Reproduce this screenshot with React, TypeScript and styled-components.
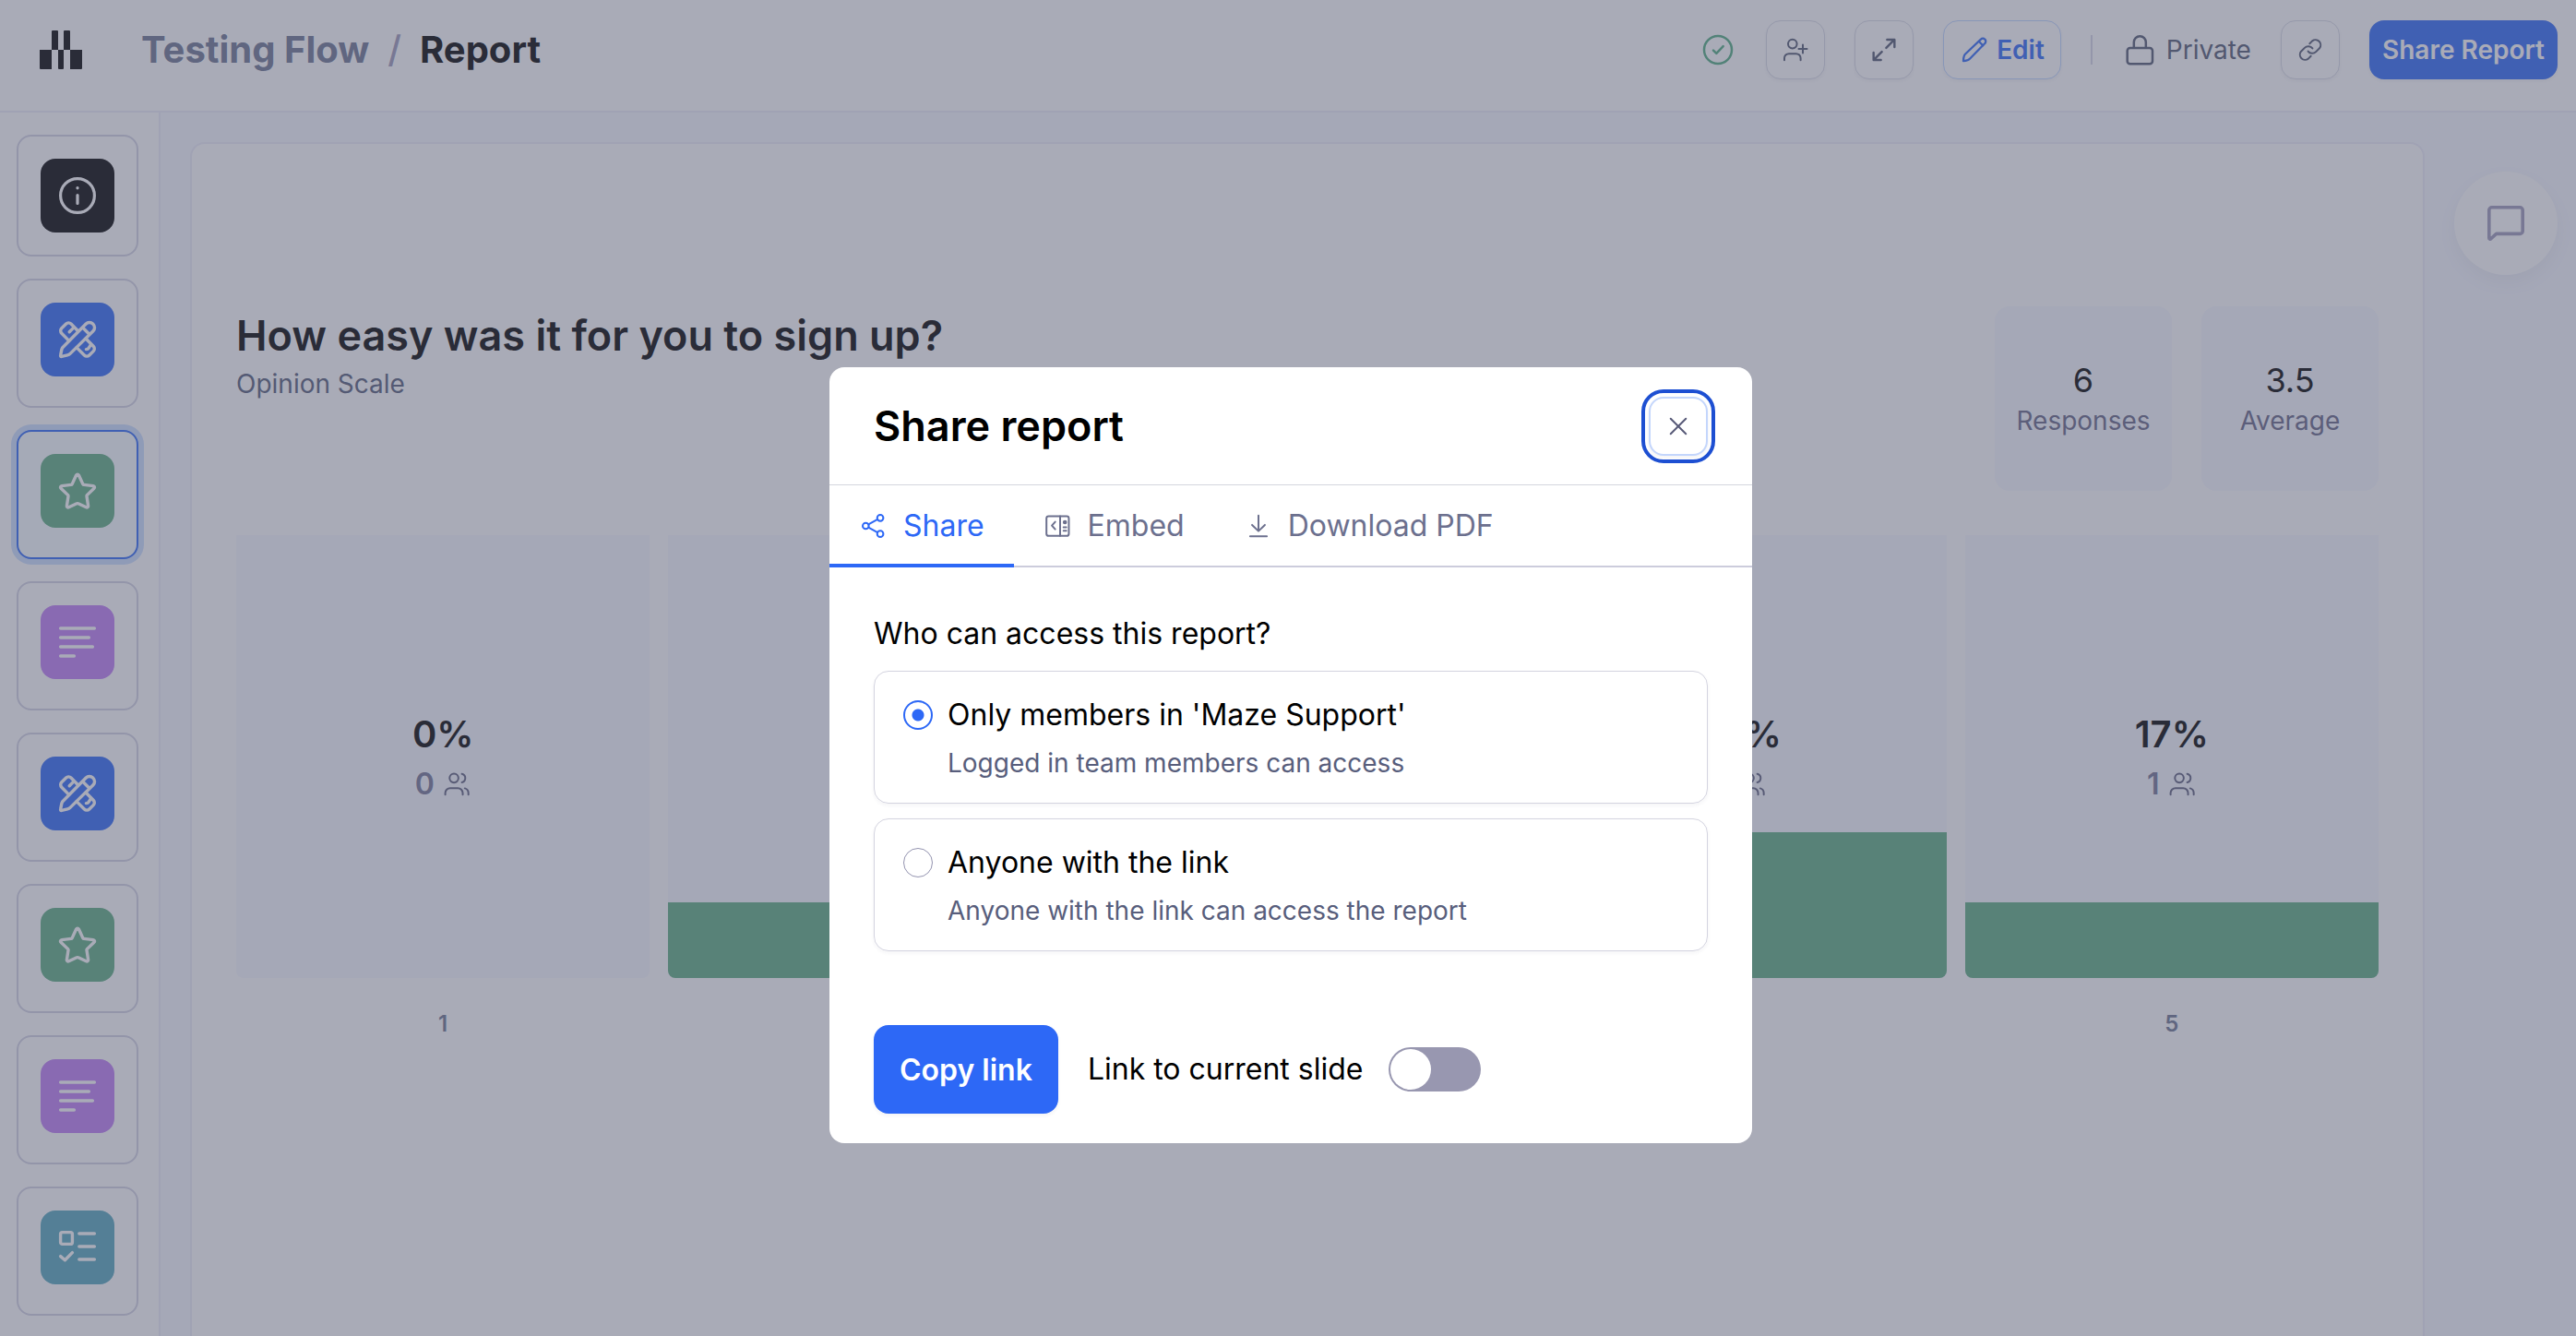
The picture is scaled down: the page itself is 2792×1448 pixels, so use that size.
import React, { useState } from "react";
import styled, { createGlobalStyle, css } from "styled-components";

const GlobalStyle = createGlobalStyle`
  *, *::before, *::after { box-sizing: border-box; }
  html, body { margin: 0; height: 100%; overflow: hidden; }
  #root { height: 100%; }
  body {
    font-family: Inter, "Liberation Sans", sans-serif;
    font-size: 28px;
    color: #000;
    background: #f6f8ff;
  }
  button, input { font: inherit; color: inherit; margin: 0; }
  h1, h2, h3, p, ol, ul, fieldset, legend { margin: 0; padding: 0; border: 0; list-style: none; }
`;

const Page = styled.div`
  height: 100vh;
  display: flex;
  flex-direction: column;
`;

/* ---------- icons ---------- */

const Icon = styled.svg.attrs<{ $size?: number; $stroke?: number }>((p) => ({
  viewBox: p.viewBox ?? "0 0 24 24",
  "aria-hidden": true,
}))<{ $size?: number; $stroke?: number }>`
  width: ${(p) => p.$size ?? 32}px;
  height: ${(p) => p.$size ?? 32}px;
  flex: none;
  display: block;
  fill: none;
  stroke: currentColor;
  stroke-width: ${(p) => p.$stroke ?? 1.5};
  stroke-linecap: round;
  stroke-linejoin: round;
`;

const LogoMark = () => (
  <svg width="46" height="42" viewBox="0 0 46 42" fill="#000" aria-hidden>
    <path d="M0 21h13v21H1a1 1 0 0 1-1-1z" />
    <path d="M33 21h13v20a1 1 0 0 1-1 1H33z" />
    <path d="M14 0h5a1 1 0 0 1 1 1v20h-7V1a1 1 0 0 1 1-1z" />
    <path d="M27 0h5a1 1 0 0 1 1 1v20h-7V1a1 1 0 0 1 1-1z" />
    <path d="M20 21h6v20a1 1 0 0 1-1 1h-4a1 1 0 0 1-1-1z" />
  </svg>
);

const InfoIcon = () => (
  <Icon $size={48} $stroke={1.6}>
    <circle cx="12" cy="12" r="9.2" />
    <path d="M12 11.8v4.4M12 7.8v.1" />
  </Icon>
);
const DesignIcon = () => (
  <Icon $size={48} $stroke={1.7}>
    <path d="M3.9 16.4 16.6 3.5a2.600 2.600 0 0 1 3.700 0l.2.2a2.600 2.600 0 0 1 0 3.700L8 19.700c-.4.400-.9.600-1.400.7l-3.200.8c-.4.100-.7-.2-.6-.6l.6-3c.1-.5.300-.9.500-1.200z" />
    <path d="m14.900 5.600 3.500 3.500" />
    <path d="M7.400 12.700 3.400 8.600a1.900 1.900 0 0 1 0-2.700l2.400-2.400a1.900 1.900 0 0 1 2.700 0l3.900 4" />
    <path d="m9.800 5.700-2.200 2.200" />
    <path d="m16.500 11.500 4.100 4.100a1.900 1.900 0 0 1 0 2.700l-2.200 2.200a1.900 1.900 0 0 1-2.700 0l-4.200-4.200" />
    <path d="m19.300 14.700-1.200 1.900c-.3.500-.8.700-1.400.7" />
  </Icon>
);
const StarIcon = () => (
  <Icon $size={48} $stroke={1.7}>
    <path d="M11.300 3.500a.8.800 0 0 1 1.400 0l2.200 4.800a.8.800 0 0 0 .6.400l5 .6c.7.100 1 .9.500 1.300l-3.700 3.600a.8.800 0 0 0-.3.700l.8 5.200c.1.600-.5 1.100-1.100.8l-4.300-2a.9.900 0 0 0-.8 0l-4.300 2c-.6.300-1.200-.2-1.100-.8l.8-5.200a.8.800 0 0 0-.3-.7L3 10.600c-.5-.4-.2-1.200.5-1.300l5-.6a.8.800 0 0 0 .6-.4z" />
  </Icon>
);
const TextIcon = () => (
  <Icon $size={48} $stroke={1.7}>
    <path d="M2.800 4.500h18.400M2.800 9.500h15.400M2.800 14.500h17.400M2.800 19.500h7.400" />
  </Icon>
);
const ChecklistIcon = () => (
  <Icon $size={48} $stroke={1.7}>
    <rect x="2.800" y="3.800" width="6.400" height="6.400" rx="1" />
    <path d="M12.900 4.500h8.300M12.900 11.500h8.300M12.900 18.500h8.300M2.800 16.800l2.400 2.100 4-4.100" />
  </Icon>
);
const CheckCircleIcon = () => (
  <Icon $size={40}>
    <circle cx="12" cy="12" r="9" />
    <path d="m9 12.400 2 1.900 4.400-4.600" />
  </Icon>
);
const UserPlusIcon = () => (
  <Icon>
    <circle cx="9.600" cy="7.200" r="3.600" />
    <path d="M3 20.500v-1.700a3.700 3.700 0 0 1 3.700-3.700h5.800a3.700 3.700 0 0 1 3.700 3.700v1.700M18 7.800v6.800M21.400 11.200h-6.800" />
  </Icon>
);
const ExpandIcon = () => (
  <Icon $stroke={1.8}>
    <path d="M14.500 3.700h6v6M20.300 3.900l-6.500 6.500M9.500 20.300h-6v-6M3.700 20.100l6.500-6.500" />
  </Icon>
);
const PencilIcon = () => (
  <Icon $stroke={1.7}>
    <path d="M3 21.100c0-1.700.2-3 .6-4.100.2-.6.600-1.200 1-1.600L17.200 3.500a2.300 2.300 0 0 1 3.300 0 2.300 2.300 0 0 1 0 3.300L8.200 19.300c-.5.500-1.100.8-1.700 1-1 .3-2.100.6-3.500.8z" />
    <path d="m15.700 5.200 3.200 3.200" />
  </Icon>
);
const LockIcon = () => (
  <Icon $size={40}>
    <rect x="3.400" y="10.800" width="16.400" height="10.400" rx="1.800" />
    <path d="M7.700 10.500V7a3.900 3.900 0 0 1 7.800 0v3.500" />
  </Icon>
);
const LinkIcon = () => (
  <Icon>
    <path d="M10.200 13.200a4.200 4.200 0 0 0 6.400.4l2.900-2.900a4.200 4.200 0 0 0-5.900-5.900l-2.100 2.100" />
    <path d="M13.800 10.800a4.200 4.200 0 0 0-6.400-.4l-2.900 2.900a4.200 4.200 0 0 0 5.900 5.900l2.100-2.100" />
  </Icon>
);
const ChatIcon = () => (
  <Icon $size={48} $stroke={1.8}>
    <path d="M2.900 4.900a1.500 1.500 0 0 1 1.500-1.500h15.200a1.500 1.500 0 0 1 1.500 1.500v11.300a1.500 1.500 0 0 1-1.500 1.500H6.800l-2.900 2.700c-.4.300-1 .1-1-.4z" />
  </Icon>
);
const UsersIcon = () => (
  <Icon>
    <circle cx="9.800" cy="7" r="3.600" />
    <path d="M2.700 20.500v-1.300a4 4 0 0 1 4-4h6.200a4 4 0 0 1 4 4v1.300M16.200 3.500a3.600 3.600 0 0 1 0 7M18.600 15.300a4 4 0 0 1 2.900 3.900v1.300" />
  </Icon>
);
const CloseIcon = () => (
  <Icon>
    <path d="M5.800 5.800l12.400 12.400M18.200 5.800 5.800 18.200" />
  </Icon>
);
const ShareIcon = () => (
  <Icon>
    <circle cx="5.500" cy="12" r="2.500" />
    <circle cx="17.300" cy="5.500" r="2.500" />
    <circle cx="17.300" cy="18.500" r="2.500" />
    <path d="M7.700 10.800l7.400-4.100M7.700 13.200l7.400 4.100" />
  </Icon>
);
const EmbedIcon = () => (
  <Icon>
    <rect x="2.400" y="4.100" width="18.200" height="16" rx="1.800" />
    <path d="M13.500 4.100v16M9.500 8.700 6.800 11.700l2.700 3M16.300 13.100h2.200M16.300 16h2.200" />
    <circle cx="17.400" cy="9" r="1" fill="currentColor" />
  </Icon>
);
const DownloadIcon = () => (
  <Icon>
    <path d="M12 3.500v12.300M6.800 11.200l5.200 5 5.200-5M5.200 20.500h13.600" />
  </Icon>
);

/* ---------- header ---------- */

const TopBar = styled.header`
  height: 122px;
  flex: none;
  display: flex;
  align-items: flex-start;
  justify-content: space-between;
  padding: 22px 20px 0 43px;
  background: #fff;
  border-bottom: 2px solid #ececf8;
`;

const Brand = styled.div`
  height: 64px;
  display: flex;
  align-items: center;
  gap: 64px;
`;

const Crumbs = styled.nav`
  display: flex;
  align-items: center;
  gap: 20px;
  font-size: 40px;
  line-height: 48px;
  font-weight: 700;
`;

const CrumbLink = styled.a`
  color: #6c7490;
  text-decoration: none;
`;

const Slash = styled.span`
  color: #9c98b8;
  font-weight: 500;
`;

const Actions = styled.div`
  display: flex;
  align-items: center;
  gap: 32px;
`;

const Saved = styled.span`
  color: #50ac80;
`;

const buttonBase = css`
  display: inline-flex;
  align-items: center;
  justify-content: center;
  height: 64px;
  border-radius: 16px;
  cursor: pointer;
  box-shadow: 0 2px 4px rgba(30, 34, 70, 0.06);
`;

const IconButton = styled.button`
  ${buttonBase}
  width: 64px;
  padding: 0;
  color: #505870;
  background: #fff;
  border: 1px solid #d8dae4;
`;

const EditButton = styled.button`
  ${buttonBase}
  gap: 8px;
  padding: 0 17px;
  color: #2d68f6;
  background: #fff;
  border: 1px solid #bcd4ff;
  font-weight: 600;
`;

const PrimaryButton = styled.button<{ $large?: boolean }>`
  ${buttonBase}
  height: ${(p) => (p.$large ? 96 : 64)}px;
  padding: 0 ${(p) => (p.$large ? 28 : 14)}px;
  font-size: ${(p) => (p.$large ? 32 : 28)}px;
  font-weight: 600;
  color: #fff;
  background: #2d68f6;
  border: 0;
`;

const Divider = styled.span`
  width: 2px;
  height: 32px;
  background: #d4d4e4;
`;

const Privacy = styled.span`
  display: flex;
  align-items: center;
  gap: 8px;
  color: #505870;
`;

/* ---------- side rail ---------- */

const Body = styled.div`
  flex: 1;
  min-height: 0;
  display: flex;
`;

const Rail = styled.nav`
  width: 174px;
  flex: none;
  display: flex;
  flex-direction: column;
  gap: 24px;
  padding: 24px 22px 0 18px;
  background: #fff;
  border-right: 2px solid #ececf8;
`;

const Slide = styled.button<{ $selected?: boolean; $short?: boolean }>`
  flex: none;
  display: flex;
  justify-content: center;
  align-items: flex-start;
  height: ${(p) => (p.$short ? 132 : 140)}px;
  padding: 24px 0 0;
  border-radius: 16px;
  border: 2px solid ${(p) => (p.$selected ? "#2d68f6" : "#d3d3e3")};
  background: ${(p) => (p.$selected ? "#f7fdff" : "#fff")};
  box-shadow: ${(p) => (p.$selected ? "0 0 0 6px #cadeff" : "none")};
  cursor: pointer;
`;

const SlideBadge = styled.span<{ $color: string }>`
  width: 80px;
  height: 80px;
  display: flex;
  align-items: center;
  justify-content: center;
  border-radius: 16px;
  color: #fff;
  background: ${(p) => p.$color};
`;

/* ---------- report ---------- */

const Main = styled.main`
  flex: 1;
  min-width: 0;
  display: flex;
  align-items: stretch;
  gap: 32px;
  padding: 32px 20px 0 32px;
`;

const Card = styled.section`
  flex: 1;
  min-width: 0;
  padding: 176px 48px 0;
  background: #fff;
  border: 2px solid #ececf8;
  border-bottom: 0;
  border-radius: 16px 16px 0 0;
`;

const CardHead = styled.div`
  display: flex;
  justify-content: space-between;
  margin-bottom: 48px;
`;

const Question = styled.h1`
  font-size: 45px;
  line-height: 64px;
  font-weight: 600;
`;

const Kind = styled.p`
  line-height: 40px;
  color: #545c78;
`;

const Stats = styled.div`
  display: flex;
  gap: 32px;
`;

const Stat = styled.div`
  width: 192px;
  height: 200px;
  display: flex;
  flex-direction: column;
  align-items: center;
  justify-content: center;
  border-radius: 16px;
  background: #f6f8ff;
`;

const StatValue = styled.span`
  font-size: 36px;
  line-height: 48px;
`;

const StatName = styled.span`
  line-height: 40px;
  color: #646484;
`;

const Chart = styled.ol`
  display: grid;
  grid-template-columns: repeat(5, 1fr);
  column-gap: 20px;
`;

const Column = styled.li`
  display: flex;
  flex-direction: column;
  align-items: center;
  gap: 34px;
`;

const Track = styled.div`
  position: relative;
  width: 100%;
  height: 480px;
  display: flex;
  flex-direction: column;
  align-items: center;
  justify-content: center;
  gap: 6px;
  padding-top: 6px;
  border-radius: 0 0 8px 8px;
  overflow: hidden;
  background: #f6f8ff;
`;

const Fill = styled.div`
  position: absolute;
  left: 0;
  right: 0;
  bottom: 0;
  background: #5cac80;
`;

const Percent = styled.strong`
  position: relative;
  font-size: 40px;
  line-height: 48px;
  font-weight: 600;
`;

const Count = styled.span`
  position: relative;
  display: flex;
  align-items: center;
  gap: 8px;
  font-size: 32px;
  line-height: 48px;
  font-weight: 600;
  color: #727594;

  svg { color: #5c5e7c; }
`;

const ScaleLabel = styled.span`
  font-size: 24px;
  line-height: 32px;
  font-weight: 600;
  color: #6c7490;
`;

const ChatButton = styled.button`
  flex: none;
  width: 112px;
  height: 112px;
  margin-top: 32px;
  padding: 0;
  display: flex;
  align-items: center;
  justify-content: center;
  border: 0;
  border-radius: 50%;
  color: #9c98b8;
  background: #fff;
  box-shadow: 0 8px 20px rgba(0, 0, 0, 0.05);
  cursor: pointer;
`;

/* ---------- dialog ---------- */

const Overlay = styled.div`
  position: fixed;
  inset: 0;
  display: flex;
  justify-content: center;
  align-items: flex-start;
  padding: 398px 0 0 6px;
  background: rgba(84, 88, 112, 0.5);
`;

const Dialog = styled.div`
  width: 1000px;
  max-width: 100%;
  border-radius: 16px;
  background: #fff;
`;

const DialogHead = styled.header`
  display: flex;
  align-items: center;
  justify-content: space-between;
  height: 128px;
  padding: 0 48px;
  border-bottom: 1px solid #d4d6de;
`;

const DialogTitle = styled.h2`
  font-size: 45px;
  line-height: 56px;
  font-weight: 600;
`;

const CloseButton = styled(IconButton)`
  color: #585a78;
  border: 2px solid #c4d6fc;
  outline: 4px solid #1d4fd2;
  outline-offset: 4px;
`;

const Tabs = styled.div`
  display: flex;
  height: 89px;
  box-shadow: inset 0 -2px 0 #ccccdc;
`;

const Tab = styled.button<{ $active?: boolean }>`
  display: flex;
  align-items: center;
  gap: 16px;
  padding: 2px 32px 0;
  border: 0;
  border-bottom: 4px solid ${(p) => (p.$active ? "#2d68f6" : "transparent")};
  background: none;
  color: ${(p) => (p.$active ? "#2d68f6" : "#6c708e")};
  font-size: 32px;
  cursor: pointer;
`;

const Access = styled.fieldset`
  padding: 48px 48px 80px;
`;

const Legend = styled.legend`
  float: left;
  width: 100%;
  padding-bottom: 16px;
  font-size: 32px;
  line-height: 48px;
`;

const Options = styled.div`
  clear: both;
  display: flex;
  flex-direction: column;
  gap: 16px;
`;

const Option = styled.label`
  display: grid;
  grid-template-columns: 32px 1fr;
  column-gap: 16px;
  align-items: center;
  padding: 23px 31px;
  border: 1px solid #d4d4e0;
  border-radius: 16px;
  box-shadow: 0 2px 4px rgba(30, 34, 70, 0.05);
  cursor: pointer;
`;

const Radio = styled.input.attrs({ type: "radio" })`
  appearance: none;
  width: 32px;
  height: 32px;
  border: 1px solid #9494b0;
  border-radius: 50%;
  background: #fff;

  &:checked {
    border: 2px solid #2d68f6;
    background: radial-gradient(circle, #2d68f6 6px, #fff 7px);
  }
`;

const OptionTitle = styled.span`
  font-size: 32px;
  line-height: 48px;
`;

const OptionHint = styled.span`
  grid-column: 2;
  padding-top: 8px;
  line-height: 40px;
  color: #585e7c;
`;

const DialogFoot = styled.footer`
  display: flex;
  align-items: center;
  gap: 32px;
  padding: 0 48px 32px;
`;

const SwitchLabel = styled.label`
  display: flex;
  align-items: center;
  gap: 28px;
  font-size: 32px;
  line-height: 48px;
  cursor: pointer;
`;

const Switch = styled.input.attrs({ type: "checkbox", role: "switch" })`
  appearance: none;
  width: 100px;
  height: 48px;
  padding: 2px;
  border-radius: 24px;
  background: #9897b0;
  cursor: pointer;

  &::before {
    content: "";
    display: block;
    width: 44px;
    height: 44px;
    border-radius: 50%;
    background: #fff;
  }
  &:checked {
    background: #2d68f6;
  }
  &:checked::before {
    margin-left: auto;
  }
`;

/* ---------- data ---------- */

const slideKinds = {
  info: { label: "Overview", color: "#000", icon: <InfoIcon /> },
  mission: { label: "Mission", color: "#2d68f6", icon: <DesignIcon /> },
  opinion: { label: "Opinion scale", color: "#5cac80", icon: <StarIcon /> },
  open: { label: "Open question", color: "#be7cf4", icon: <TextIcon /> },
  choice: { label: "Multiple choice", color: "#54a6bc", icon: <ChecklistIcon /> },
};

const slides: (keyof typeof slideKinds)[] = [
  "info", "mission", "opinion", "open", "mission", "opinion", "open", "choice",
];

const answers = [
  { score: 1, percent: 0, people: 0 },
  { score: 2, percent: 17, people: 1 },
  { score: 3, percent: 33, people: 2 },
  { score: 4, percent: 33, people: 2 },
  { score: 5, percent: 17, people: 1 },
];

const accessOptions = [
  { id: "members", title: "Only members in 'Maze Support'", hint: "Logged in team members can access" },
  { id: "anyone", title: "Anyone with the link", hint: "Anyone with the link can access the report" },
];

const tabs = [
  { id: "share", label: "Share", icon: <ShareIcon /> },
  { id: "embed", label: "Embed", icon: <EmbedIcon /> },
  { id: "pdf", label: "Download PDF", icon: <DownloadIcon /> },
];

function ShareDialog() {
  const [tab, setTab] = useState("share");
  const [access, setAccess] = useState("members");

  return (
    <Overlay>
      <Dialog role="dialog" aria-modal="true" aria-labelledby="share-title">
        <DialogHead>
          <DialogTitle id="share-title">Share report</DialogTitle>
          <CloseButton aria-label="Close"><CloseIcon /></CloseButton>
        </DialogHead>
        <Tabs role="tablist">
          {tabs.map((t) => (
            <Tab key={t.id} role="tab" aria-selected={tab === t.id} $active={tab === t.id} onClick={() => setTab(t.id)}>
              {t.icon}
              {t.label}
            </Tab>
          ))}
        </Tabs>
        <Access>
          <Legend>Who can access this report?</Legend>
          <Options>
            {accessOptions.map((o) => (
              <Option key={o.id} htmlFor={o.id}>
                <Radio id={o.id} name="access" checked={access === o.id} onChange={() => setAccess(o.id)} />
                <OptionTitle>{o.title}</OptionTitle>
                <OptionHint>{o.hint}</OptionHint>
              </Option>
            ))}
          </Options>
        </Access>
        <DialogFoot>
          <PrimaryButton $large>Copy link</PrimaryButton>
          <SwitchLabel htmlFor="current-slide">
            Link to current slide
            <Switch id="current-slide" />
          </SwitchLabel>
        </DialogFoot>
      </Dialog>
    </Overlay>
  );
}

export default function App() {
  return (
    <>
      <GlobalStyle />
      <Page>
        <TopBar>
          <Brand>
            <LogoMark />
            <Crumbs aria-label="Breadcrumb">
              <CrumbLink href="#flow">Testing Flow</CrumbLink>
              <Slash>/</Slash>
              <span>Report</span>
            </Crumbs>
          </Brand>
          <Actions>
            <Saved><CheckCircleIcon /></Saved>
            <IconButton aria-label="Invite people"><UserPlusIcon /></IconButton>
            <IconButton aria-label="Present"><ExpandIcon /></IconButton>
            <EditButton><PencilIcon />Edit</EditButton>
            <Divider />
            <Privacy><LockIcon />Private</Privacy>
            <IconButton aria-label="Copy link"><LinkIcon /></IconButton>
            <PrimaryButton>Share Report</PrimaryButton>
          </Actions>
        </TopBar>
        <Body>
          <Rail aria-label="Slides">
            {slides.map((kind, i) => (
              <Slide key={i} $short={i === 0} $selected={i === 2} aria-label={slideKinds[kind].label}>
                <SlideBadge $color={slideKinds[kind].color}>{slideKinds[kind].icon}</SlideBadge>
              </Slide>
            ))}
          </Rail>
          <Main>
            <Card>
              <CardHead>
                <div>
                  <Question>How easy was it for you to sign up?</Question>
                  <Kind>Opinion Scale</Kind>
                </div>
                <Stats>
                  <Stat><StatValue>6</StatValue><StatName>Responses</StatName></Stat>
                  <Stat><StatValue>3.5</StatValue><StatName>Average</StatName></Stat>
                </Stats>
              </CardHead>
              <Chart>
                {answers.map((a) => (
                  <Column key={a.score}>
                    <Track>
                      <Fill style={{ height: `${a.percent}%` }} />
                      <Percent>{a.percent}%</Percent>
                      <Count>{a.people}<UsersIcon /></Count>
                    </Track>
                    <ScaleLabel>{a.score}</ScaleLabel>
                  </Column>
                ))}
              </Chart>
            </Card>
            <ChatButton aria-label="Open chat"><ChatIcon /></ChatButton>
          </Main>
        </Body>
      </Page>
      <ShareDialog />
    </>
  );
}
